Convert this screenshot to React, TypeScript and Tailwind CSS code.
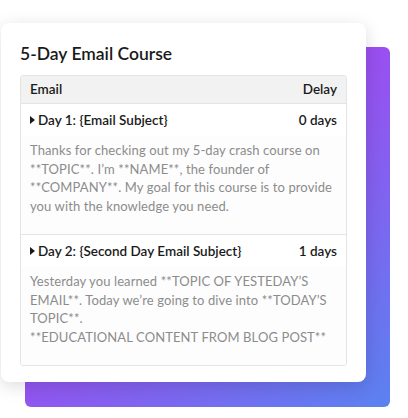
import React from 'react';

type Email = {
  subject: string;
  delay: string;
  body: string[];
};

const emails: Email[] = [
  {
    subject: 'Day 1: {Email Subject}',
    delay: '0 days',
    body: [
      "Thanks for checking out my 5-day crash course on **TOPIC**. I’m **NAME**, the founder of **COMPANY**. My goal for this course is to provide you with the knowledge you need.",
    ],
  },
  {
    subject: 'Day 2: {Second Day Email Subject}',
    delay: '1 days',
    body: [
      'Yesterday you learned **TOPIC OF YESTEDAY’S EMAIL**. Today we’re going to dive into **TODAY’S TOPIC**.',
      '**EDUCATIONAL CONTENT FROM BLOG POST**',
    ],
  },
];

const Caret = () => (
  <svg width="5" height="8" viewBox="0 0 5 8" className="mr-[3px] shrink-0">
    <path d="M0 0 L5 4 L0 8 Z" fill="#1a1a1a" />
  </svg>
);

const App = () => {
  return (
    <div
      className="w-[408px] h-[418px] bg-white overflow-hidden"
      style={{ fontFamily: 'Lato, "Noto Sans", sans-serif' }}
    >
      <div className="grid pt-[23px] pl-[1px]">
        <div className="col-start-1 row-start-1 ml-[24px] mt-[24px] w-[365px] h-[360px] rounded-[6px] bg-[linear-gradient(140deg,#a54bf0_0%,#9a4ff0_45%,#5a82f0_100%)]" />

        <div className="col-start-1 row-start-1 w-[365px] h-[359px] rounded-[8px] bg-white shadow-[0_4px_18px_rgba(0,0,0,0.14)] px-[19px] pt-[20px]">
          <h2 className="text-[17.5px] leading-[22px] font-semibold text-[#1a1a1a]">
            5-Day Email Course
          </h2>

          <div className="mt-[10px] border border-[#e4e4e4] rounded-[3px] overflow-hidden">
            <div className="flex justify-between items-center h-[28px] px-[9px] bg-[#f2f2f2] border-b border-[#e4e4e4] text-[13.5px] font-semibold text-[#1a1a1a]">
              <span>Email</span>
              <span>Delay</span>
            </div>

            {emails.map((email, i) => (
              <div
                key={email.subject}
                className={i > 0 ? 'border-t border-[#e4e4e4]' : ''}
              >
                <div className="flex justify-between items-center h-[32px] px-[9px] text-[13.5px] font-semibold text-[#1a1a1a]">
                  <span className="flex items-center">
                    <Caret />
                    {email.subject}
                  </span>
                  <span>{email.delay}</span>
                </div>
                <div className="pl-[9px] pr-[5px] pt-[5px] pb-[19px] bg-[#fdfdfd] text-[13px] tracking-[0.1px] leading-[18.5px] text-[#8c8c8c]">
                  {email.body.map((line) => (
                    <p key={line}>{line}</p>
                  ))}
                </div>
              </div>
            ))}
          </div>
        </div>
      </div>
    </div>
  );
};

export default App;
